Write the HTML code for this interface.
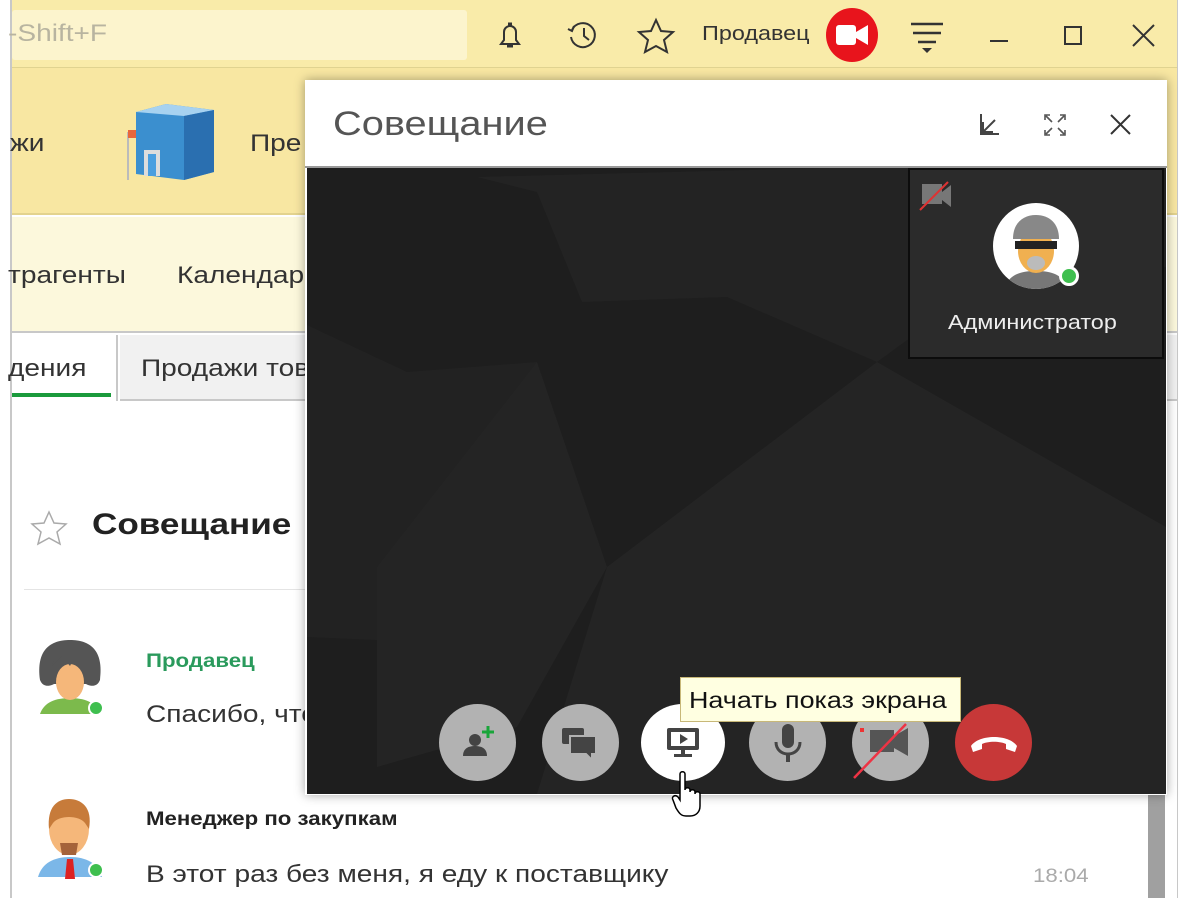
<!DOCTYPE html>
<html><head><meta charset="utf-8"><style>
*{margin:0;padding:0;box-sizing:border-box}
body{width:1200px;height:898px;overflow:hidden;background:#fff;font-family:"Liberation Sans",Arial,sans-serif;position:relative}
.a{position:absolute;white-space:nowrap}
.t{transform:scaleX(1.17);transform-origin:0 0}
</style></head><body>
<!-- main window -->
<div class="a" style="left:10px;top:0;width:1168px;height:898px;background:#fff;border-left:2px solid #c8c8c8;border-right:1px solid #c8c8c8"></div>
<div class="a" style="left:12px;top:0;width:1165px;height:68px;background:#f9eba9;border-bottom:1px solid #e0d390"></div>
<div class="a" style="left:12px;top:10px;width:455px;height:50px;background:#fcf4cd;border-radius:3px"></div>
<div class="a t" style="left:8px;top:20px;font-size:24px;color:#b8b4a0">-Shift+F</div>
<!-- top icons -->
<svg class="a" style="left:490px;top:15px" width="40" height="40" viewBox="0 0 40 40" fill="none" stroke="#333" stroke-width="2"><path d="M11 29h18l-3-4v-8a6 6 0 0 0-12 0v8z"/><path d="M18 9h4M17 31h6" stroke-width="3"/></svg>
<svg class="a" style="left:563px;top:15px" width="40" height="40" viewBox="0 0 40 40" fill="none" stroke="#333" stroke-width="2"><path d="M9 15a12 12 0 1 1-1 7"/><path d="M5 14l4 2 2-5"/><path d="M21 13v8l5 4"/></svg>
<svg class="a" style="left:636px;top:17px" width="40" height="40" viewBox="0 0 40 40" fill="none" stroke="#333" stroke-width="2"><path d="M20 3l5 11 12 1-9 8 3 12-11-6-11 6 3-12-9-8 12-1z"/></svg>
<div class="a t" style="left:702px;top:23px;font-size:20px;color:#333">Продавец</div>
<div class="a" style="left:826px;top:8px;width:52px;height:54px;border-radius:50%;background:#e8141c"></div>
<svg class="a" style="left:832px;top:20px" width="42" height="30" viewBox="0 0 42 30"><rect x="4" y="5" width="20" height="20" rx="3" fill="#fff"/><path d="M24 12l12-7v20l-12-7z" fill="#fff"/></svg>
<svg class="a" style="left:905px;top:18px" width="44" height="40" viewBox="0 0 44 40" stroke="#333" stroke-width="2.4"><path d="M6 6h32M8 15h28M13 24h18"/><path d="M17 30h10l-5 5z" fill="#333" stroke="none"/></svg>
<div class="a" style="left:990px;top:40px;width:18px;height:2px;background:#333"></div>
<div class="a" style="left:1064px;top:26px;width:18px;height:19px;border:2px solid #333"></div>
<svg class="a" style="left:1130px;top:22px" width="28" height="28" stroke="#333" stroke-width="2"><path d="M3 3l21 21M24 3L3 24"/></svg>
<!-- ribbon -->
<div class="a" style="left:12px;top:68px;width:1165px;height:147px;background:#f8e7a2;border-bottom:2px solid #e3d38e"></div>
<div class="a t" style="left:10px;top:130px;font-size:24px;color:#333">жи</div>
<svg class="a" style="left:120px;top:98px" width="100" height="85" viewBox="0 0 100 85"><line x1="8" y1="34" x2="8" y2="82" stroke="#bbb" stroke-width="2"/><rect x="8" y="32" width="10" height="8" fill="#e8663c"/><path d="M16 14l30-8 48 6v62l-30 8-48-6z" fill="#3b8fcf"/><path d="M16 14l30-8 48 6-30 6z" fill="#a7d2f0"/><path d="M64 18l30-6v62l-30 8z" fill="#2a6fb0"/><rect x="24" y="52" width="16" height="26" fill="#ddd"/><rect x="28" y="56" width="8" height="22" fill="#4a9fe0"/></svg>
<div class="a t" style="left:250px;top:130px;font-size:24px;color:#333">Пре</div>
<!-- section -->
<div class="a" style="left:12px;top:217px;width:1165px;height:116px;background:#fcf8dc;border-bottom:2px solid #c8c8c8"></div>
<div class="a t" style="left:8px;top:262px;font-size:24px;color:#333">трагенты</div>
<div class="a t" style="left:177px;top:262px;font-size:24px;color:#333">Календар</div>
<!-- tabs -->
<div class="a" style="left:12px;top:335px;width:106px;height:66px;background:#fff;border-right:2px solid #c8c8c8"></div>
<div class="a" style="left:12px;top:393px;width:99px;height:4px;background:#1a9a3c"></div>
<div class="a t" style="left:8px;top:355px;font-size:24px;color:#333">дения</div>
<div class="a" style="left:120px;top:335px;width:1057px;height:66px;background:#f1f1f1;border-bottom:2px solid #c8c8c8"></div>
<div class="a t" style="left:141px;top:355px;font-size:24px;color:#333">Продажи тов</div>
<!-- content -->
<svg class="a" style="left:30px;top:510px" width="38" height="36" viewBox="0 0 38 36" fill="none" stroke="#aaa" stroke-width="1.5"><path d="M19 2l5 11 12 1-9 8 3 12-11-6-11 6 3-12-9-8 12-1z"/></svg>
<div class="a t" style="left:92px;top:508px;font-size:30px;font-weight:bold;color:#222">Совещание</div>
<div class="a" style="left:24px;top:589px;width:1120px;height:1px;background:#e4e4e4"></div>
<svg class="a" style="left:34px;top:636px" width="72" height="86" viewBox="0 0 72 86"><path d="M6 78c4-12 16-16 30-16s26 4 30 16z" fill="#7cba4c"/><path d="M6 44c-4-30 10-40 30-40s34 10 30 40c-4 10-14 4-14 4H20S10 54 6 44z" fill="#555"/><ellipse cx="36" cy="46" rx="14" ry="18" fill="#f5b77a"/><path d="M18 30l10-10 8 10 6-12 10 12v-6l-4-8H22z" fill="#555"/><circle cx="62" cy="72" r="7" fill="#3fbf4f" stroke="#fff" stroke-width="2"/></svg>
<div class="a t" style="left:146px;top:651px;font-size:19px;font-weight:bold;color:#2a9a5c">Продавец</div>
<div class="a t" style="left:146px;top:701px;font-size:24px;color:#333">Спасибо, что</div>
<svg class="a" style="left:34px;top:795px" width="72" height="90" viewBox="0 0 72 90"><path d="M4 82c4-14 16-20 32-20s28 6 32 20z" fill="#7bb7e8"/><path d="M33 64h6l2 20h-10z" fill="#d22"/><ellipse cx="35" cy="34" rx="20" ry="26" fill="#f5b77a"/><path d="M15 34c-2-22 8-30 20-30s24 8 20 30l-4-6c-6-8-26-8-32 0z" fill="#c77b3a"/><path d="M26 48h18l-2 12h-14z" fill="#a5633a"/><circle cx="62" cy="75" r="7" fill="#3fbf4f" stroke="#fff" stroke-width="2"/></svg>
<div class="a t" style="left:146px;top:809px;font-size:19px;font-weight:bold;color:#222">Менеджер по закупкам</div>
<div class="a t" style="left:146px;top:861px;font-size:24px;color:#333">В этот раз без меня, я еду к поставщику</div>
<div class="a t" style="left:1033px;top:866px;font-size:19px;color:#aaa">18:04</div>
<div class="a" style="left:1148px;top:795px;width:17px;height:103px;background:#a0a0a0"></div>
<!-- dialog -->
<div class="a" style="left:305px;top:80px;width:862px;height:715px;background:#fff;box-shadow:0 0 10px rgba(0,0,0,.35)"></div>
<div class="a t" style="left:333px;top:105px;font-size:34px;color:#555">Совещание</div>
<svg class="a" style="left:975px;top:110px" width="30" height="30" stroke="#444" stroke-width="2" fill="none"><path d="M6 4v20h18M8 22l12-12M8 12v10h10"/></svg>
<svg class="a" style="left:1040px;top:110px" width="30" height="30" stroke="#555" stroke-width="1.6" fill="none"><path d="M5 10V5h5M20 5h5v5M25 20v5h-5M10 25H5v-5M6 6l6 6M24 6l-6 6M24 24l-6-6M6 24l6-6"/></svg>
<svg class="a" style="left:1106px;top:110px" width="30" height="30" stroke="#333" stroke-width="2"><path d="M5 5l19 19M24 5L5 24"/></svg>
<svg class="a" style="left:307px;top:167px" width="859" height="627" viewBox="0 0 859 627">
<rect width="859" height="627" fill="#1e1e1e"/>
<polygon points="170,10 560,0 859,0 859,100 690,108 570,195 420,130 275,135 230,25" fill="#232323"/>
<polygon points="0,158 100,205 230,195 300,400 230,480 0,470" fill="#222"/>
<polygon points="70,400 230,195 300,400 210,560 70,600" fill="#242424"/>
<polygon points="300,400 570,195 859,360 859,627 230,627" fill="#242424"/>
</svg>
<div class="a" style="left:305px;top:166px;width:862px;height:2px;background:#999"></div>
<!-- admin tile -->
<div class="a" style="left:908px;top:168px;width:256px;height:191px;background:#2b2b2b;border:2px solid #0c0c0c"></div>
<svg class="a" style="left:918px;top:180px" width="36" height="32" viewBox="0 0 36 32"><rect x="4" y="4" width="20" height="20" fill="#777"/><path d="M24 12l9-7v22l-9-7z" fill="#777"/><path d="M2 30L30 2" stroke="#d33" stroke-width="2"/></svg>
<div class="a" style="left:993px;top:203px;width:86px;height:86px;border-radius:50%;background:#fff;overflow:hidden">
<svg width="86" height="86" viewBox="0 0 86 86"><path d="M10 90c4-18 16-22 33-22s29 4 33 22z" fill="#777"/><ellipse cx="43" cy="48" rx="18" ry="22" fill="#f0b050"/><path d="M20 36c0-16 10-24 23-24s23 8 23 24z" fill="#888"/><rect x="22" y="38" width="42" height="8" fill="#222"/><ellipse cx="43" cy="60" rx="9" ry="7" fill="#bbb"/></svg></div>
<div class="a" style="left:1059px;top:266px;width:20px;height:20px;border-radius:50%;background:#3fbf4f;border:3px solid #fff"></div>
<div class="a t" style="left:948px;top:312px;font-size:20px;color:#eee">Администратор</div>
<!-- buttons -->
<div class="a" style="left:439px;top:704px;width:77px;height:77px;border-radius:50%;background:#b2b2b2"></div>
<svg class="a" style="left:455px;top:720px" width="46" height="46" viewBox="0 0 46 46"><circle cx="20" cy="20" r="6" fill="#444"/><path d="M8 36c0-8 6-10 12-10s12 2 12 10z" fill="#444"/><path d="M33 6v12M27 12h12" stroke="#19a53a" stroke-width="3"/></svg>
<div class="a" style="left:542px;top:704px;width:77px;height:77px;border-radius:50%;background:#b2b2b2"></div>
<svg class="a" style="left:558px;top:722px" width="46" height="42" viewBox="0 0 46 42"><rect x="4" y="6" width="22" height="16" rx="2" fill="#444"/><path d="M12 14h26v18h-4v6l-6-6H12z" fill="#444" stroke="#b2b2b2" stroke-width="2"/></svg>
<div class="a" style="left:641px;top:704px;width:84px;height:77px;border-radius:50%;background:#fff"></div>
<svg class="a" style="left:663px;top:725px" width="40" height="36" viewBox="0 0 40 36"><rect x="4" y="3" width="32" height="22" rx="2" fill="#444"/><rect x="8" y="7" width="24" height="14" fill="#fff"/><path d="M17 9l8 5-8 5z" fill="#444"/><rect x="18" y="25" width="4" height="5" fill="#444"/><rect x="11" y="29" width="18" height="3" fill="#444"/></svg>
<div class="a" style="left:749px;top:704px;width:77px;height:77px;border-radius:50%;background:#b2b2b2"></div>
<svg class="a" style="left:770px;top:720px" width="36" height="46" viewBox="0 0 36 46"><rect x="12" y="4" width="12" height="24" rx="6" fill="#444"/><path d="M6 22c0 8 6 12 12 12s12-4 12-12" stroke="#444" stroke-width="3" fill="none"/><rect x="16" y="34" width="4" height="8" fill="#444"/></svg>
<div class="a" style="left:852px;top:704px;width:77px;height:77px;border-radius:50%;background:#b2b2b2"></div>
<svg class="a" style="left:850px;top:722px" width="70" height="60" viewBox="0 0 70 60"><rect x="20" y="8" width="24" height="22" fill="#555"/><path d="M44 14l14-8v28l-14-8z" fill="#555"/><rect x="10" y="6" width="4" height="4" fill="#e33"/><path d="M4 56L56 2" stroke="#e34" stroke-width="2.5"/></svg>
<div class="a" style="left:955px;top:704px;width:77px;height:77px;border-radius:50%;background:#c73838"></div>
<svg class="a" style="left:967px;top:728px" width="54" height="30" viewBox="0 0 54 30"><path d="M4 18c8-12 38-12 46 0l-2 6-9-3v-5c-6-3-18-3-24 0v5l-9 3z" fill="#fff"/></svg>
<!-- tooltip -->
<div class="a" style="left:680px;top:677px;width:281px;height:45px;background:#ffffe1;border:1px solid #c8b878"></div>
<div class="a t" style="left:689px;top:687px;font-size:23px;color:#111">Начать показ экрана</div>
<!-- cursor -->
<svg class="a" style="left:670px;top:770px" width="40" height="50" viewBox="0 0 40 50"><path d="M10 4c0-3 5-3 5 0v16c0-3 5-3 5 0v2c0-3 5-3 5 0v2c0-3 5-3 5 0v12c0 6-4 10-10 10h-4c-5 0-7-3-10-8L3 30c-2-3 2-6 5-3l2 3z" fill="#fff" stroke="#000" stroke-width="1.5"/></svg>
</body></html>
